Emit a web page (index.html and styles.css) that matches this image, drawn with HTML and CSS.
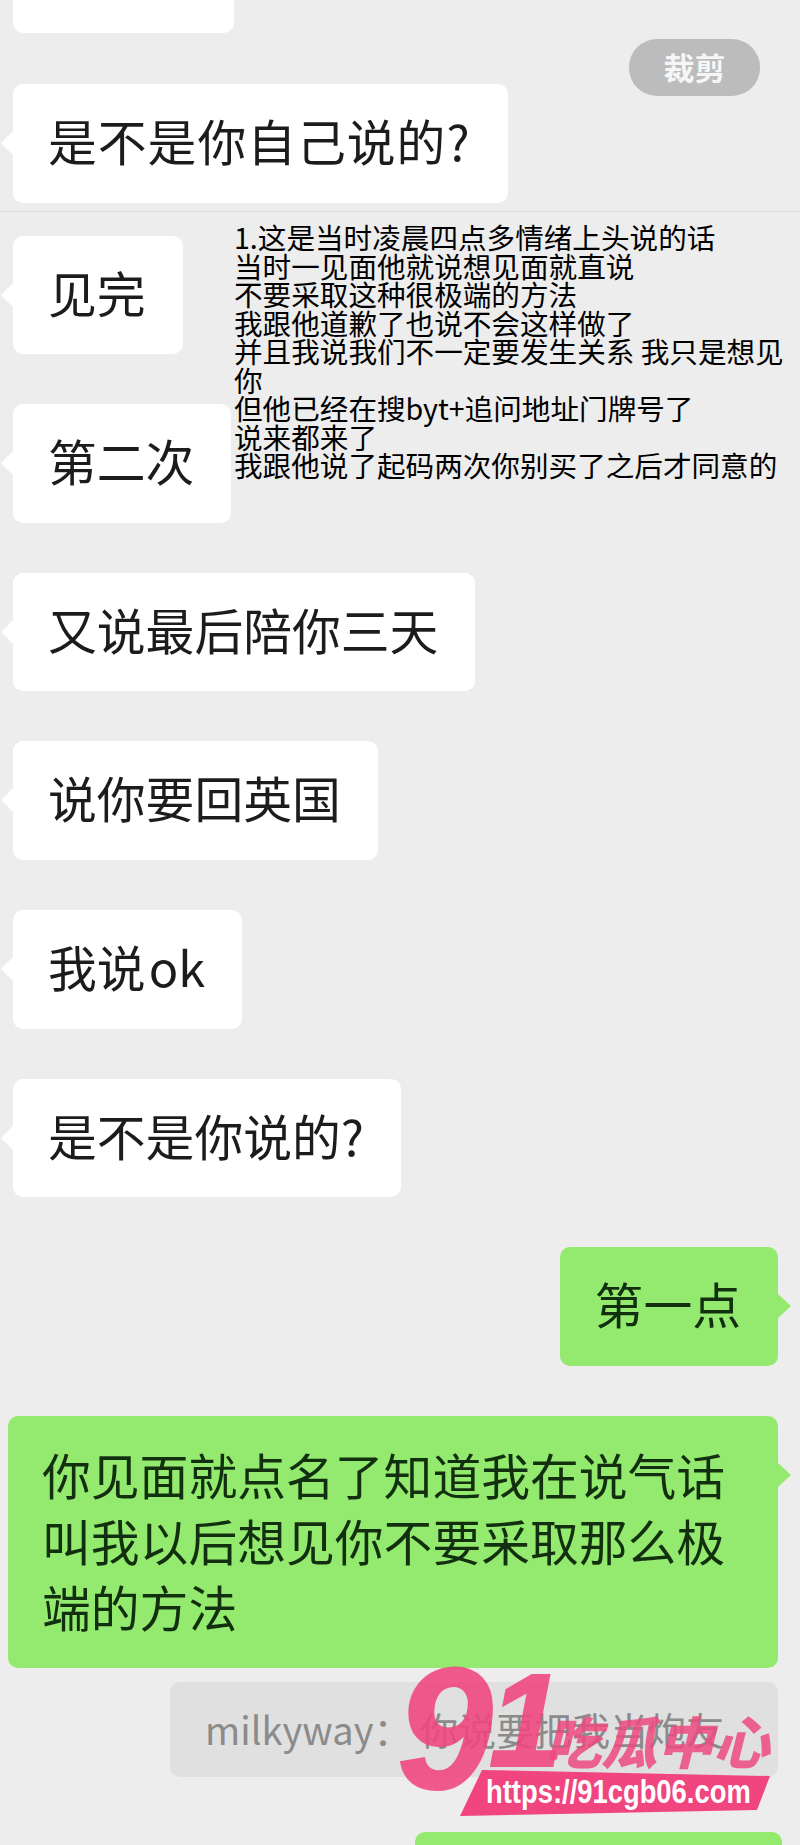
FILE: index.html
```html
<!DOCTYPE html>
<html lang="zh-CN">
<head>
    <meta charset="UTF-8">
    <title>聊天记录</title>
    <link rel="stylesheet" href="styles.css">
</head>
<body>
    <div class="chat">
        <div class="bubble cut-off"></div>
        <div class="bubble left spaced">是不是你自己说的?</div>
        <hr class="divider">
        <div class="bubble left">见完</div>
        <div class="bubble left">第二次</div>
        <div class="bubble left">又说最后陪你三天</div>
        <div class="bubble left">说你要回英国</div>
        <div class="bubble left">我说&#8202;ok</div>
        <div class="bubble left">是不是你说的?</div>
        <div class="bubble right">第一点</div>
        <div class="bubble right wide">你见面就点名了知道我在说气话叫我以后想见你不要采取那么极端的方法</div>
        <div class="quote">milkyway：&nbsp;你说要把我当炮友</div>
        <div class="bubble right last"></div>
    </div>

    <div class="crop-btn">裁剪</div>

    <p class="note">1.这是当时凌晨四点多情绪上头说的话<br>当时一见面他就说想见面就直说<br>不要采取这种很极端的方法<br>我跟他道歉了也说不会这样做了<br>并且我说我们不一定要发生关系 我只是想见<br>你<br>但他已经在搜byt+追问地址门牌号了<br>说来都来了<br>我跟他说了起码两次你别买了之后才同意的</p>

    <svg class="watermark" width="400" height="160" viewBox="0 0 400 160">
        <text class="wm-nine" x="0" y="118">9</text>
        <text class="wm-one" x="92" y="96">1</text>
        <text class="wm-name" x="148" y="94">吃瓜中心</text>
        <polygon class="wm-banner" points="85,100 373,106 360,140 63,146"></polygon>
        <text class="wm-url" transform="translate(89 133) scale(0.83 1)">https://91cgb06.com</text>
    </svg>
</body>
</html>
```

FILE: styles.css
```css
html, body { margin: 0; padding: 0; }
body {
    position: relative;
    width: 800px;
    height: 1845px;
    overflow: hidden;
    background-color: #ededed;
    font-family: "Noto Sans CJK SC", "Liberation Sans", sans-serif;
}

.chat { display: flex; flex-direction: column; align-items: flex-start; gap: 50px; height: 1845px; }

.bubble {
    position: relative;
    box-sizing: border-box;
    padding: 23px 37px 29px 35px;
    border-radius: 10px;
    font-size: 48.8px;
    line-height: 66.6px;
    color: #1c1c1c;
    background-color: #fff;
}
.bubble.left { margin-left: 13px; }
.bubble.left::before {
    content: "";
    position: absolute;
    left: -12px;
    top: 47px;
    border-style: solid;
    border-width: 12px 12px 12px 0;
    border-color: transparent #fff transparent transparent;
}
.bubble.right {
    align-self: flex-end;
    margin-right: 22px;
    color: #12300f;
    background-color: #93ea6e;
}
.bubble.right::after {
    content: "";
    position: absolute;
    right: -13px;
    top: 47px;
    border-style: solid;
    border-width: 12px 0 12px 13px;
    border-color: transparent transparent transparent #93ea6e;
}

.spaced { letter-spacing: 1px; }

.cut-off { width: 221px; height: 33px; padding: 0; margin-left: 13px; margin-bottom: 1px; border-radius: 0 0 10px 10px; }

.divider { align-self: stretch; height: 1px; margin: -42px 0 -26px; border: 0; background-color: #d9d9d9; }

.wide { width: 770px; padding: 25px 35px 29px 34px; font-size: 48.8px; line-height: 66px; }

.quote {
    align-self: flex-end;
    box-sizing: border-box;
    width: 608px;
    height: 95px;
    margin: -36px 22px 0 0;
    padding-left: 35px;
    border-radius: 10px;
    font-size: 38px;
    line-height: 93px;
    white-space: nowrap;
    color: #8b8b8b;
    background-color: #e0e0e0;
}

.bubble.last { flex: 1; width: 367px; padding: 0; margin-top: 5px; margin-right: 18px; border-radius: 10px 10px 0 0; }
.bubble.last::after { display: none; }

.crop-btn {
    position: absolute;
    left: 629px;
    top: 39px;
    width: 131px;
    height: 57px;
    border-radius: 28px;
    font-size: 31px;
    font-weight: 700;
    line-height: 56px;
    text-align: center;
    color: #f6f6f6;
    background-color: #bcbcbc;
}

.note {
    position: absolute;
    left: 234px;
    top: 223px;
    margin: 0;
    font-size: 28.6px;
    line-height: 28.5px;
    font-weight: 400;
    white-space: nowrap;
    color: #000;
}

.watermark { position: absolute; left: 397px; top: 1670px; overflow: visible; }
.wm-nine, .wm-one { font-family: "Liberation Sans", sans-serif; font-weight: 700; font-style: italic; fill: #f0457e; stroke: #f0457e; stroke-width: 2px; opacity: 0.88; }
.wm-nine { font-size: 172px; }
.wm-one { font-size: 132px; }
.wm-name { font-family: "Noto Sans CJK SC", sans-serif; font-size: 56px; font-weight: 900; font-style: italic; fill: #ee4a80; opacity: 0.85; }
.wm-banner { fill: #f0457e; }
.wm-url { font-family: "Liberation Sans", sans-serif; font-size: 33px; font-weight: 700; fill: #fff; }
```
